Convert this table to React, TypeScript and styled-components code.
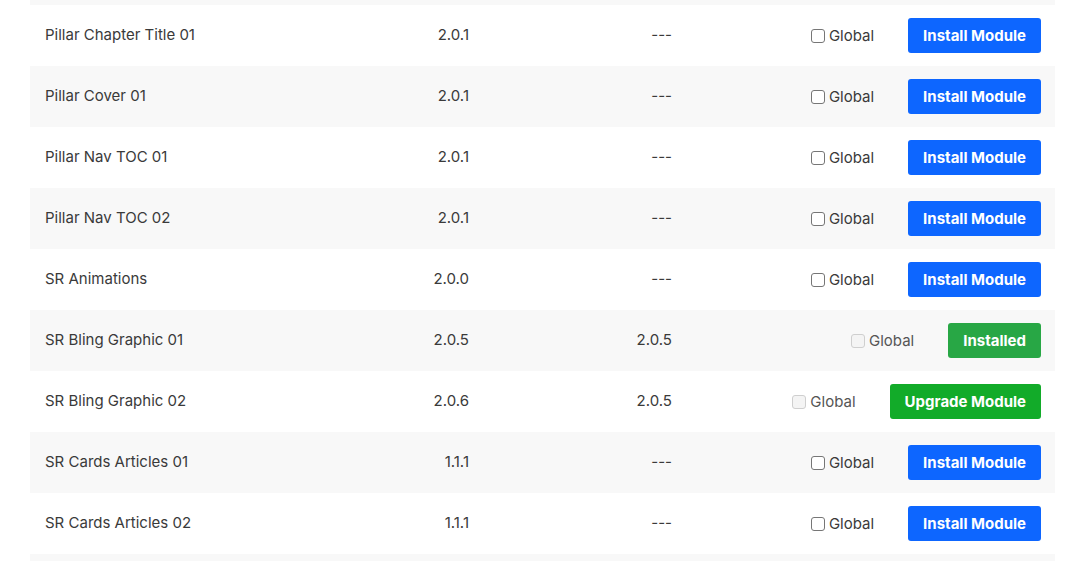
import styled, { createGlobalStyle } from "styled-components";

const GlobalStyle = createGlobalStyle`
  html, body {
    margin: 0;
    padding: 0;
    background: #fff;
    overflow: hidden;
  }
  body {
    font-family: Inter, "Noto Sans", sans-serif;
    color: #3a3a3a;
  }
`;

type ModuleRow = {
  name: string;
  version: string;
  installed?: string;
  status: "install" | "installed" | "upgrade";
};

const modules: ModuleRow[] = [
  { name: "Pillar Chapter Title 01", version: "2.0.1", status: "install" },
  { name: "Pillar Cover 01", version: "2.0.1", status: "install" },
  { name: "Pillar Nav TOC 01", version: "2.0.1", status: "install" },
  { name: "Pillar Nav TOC 02", version: "2.0.1", status: "install" },
  { name: "SR Animations", version: "2.0.0", status: "install" },
  { name: "SR Bling Graphic 01", version: "2.0.5", installed: "2.0.5", status: "installed" },
  { name: "SR Bling Graphic 02", version: "2.0.6", installed: "2.0.5", status: "upgrade" },
  { name: "SR Cards Articles 01", version: "1.1.1", status: "install" },
  { name: "SR Cards Articles 02", version: "1.1.1", status: "install" },
];

const Page = styled.div`
  padding: 0 29px 0 30px;
  height: 561px;
  overflow: hidden;
`;

const Table = styled.div`
  display: flex;
  flex-direction: column;
`;

// edges of the striped rows scrolled out of view
const ScrollCap = styled.div<{ $h: number }>`
  height: ${(p) => p.$h}px;
  flex-shrink: 0;
  background: #f8f8f8;
`;

const Row = styled.div<{ $striped: boolean }>`
  display: grid;
  grid-template-columns: 251px 203px 203px 1fr;
  align-items: center;
  height: 61px;
  flex-shrink: 0;
  background: ${(p) => (p.$striped ? "#f8f8f8" : "#fff")};
  font-size: 15px;
  line-height: 20px;
  color: #3a3a3a;
`;

const Cell = styled.div<{ $align?: "left" | "right" }>`
  padding: 0 15px 1px;
  text-align: ${(p) => p.$align || "left"};
  white-space: nowrap;
`;

const ActionCell = styled.div`
  display: flex;
  align-items: center;
  justify-content: flex-end;
  gap: 34px;
  padding: 0 14px 0 15px;
`;

const CheckLabel = styled.label<{ $disabled?: boolean }>`
  display: flex;
  align-items: center;
  gap: 4px;
  font-size: 15px;
  color: ${(p) => (p.$disabled ? "#555" : "#3a3a3a")};
`;

const Box = styled.span<{ $disabled?: boolean }>`
  width: 14px;
  height: 14px;
  box-sizing: border-box;
  border: 1px solid ${(p) => (p.$disabled ? "#cfcfcf" : "#767676")};
  border-radius: 3px;
  background: ${(p) => (p.$disabled ? "#f4f4f4" : "#fff")};
`;

const Button = styled.button<{ $kind: ModuleRow["status"] }>`
  height: 35px;
  padding: 0 15px;
  border: none;
  border-radius: 3px;
  font-family: Inter, "Noto Sans", sans-serif;
  font-size: 15px;
  font-weight: 700;
  color: #fff;
  cursor: pointer;
  background: ${(p) =>
    p.$kind === "install" ? "#0d66ff" : p.$kind === "installed" ? "#28a745" : "#12ab29"};
`;

const labels = {
  install: "Install Module",
  installed: "Installed",
  upgrade: "Upgrade Module",
};

export default function App() {
  return (
    <>
      <GlobalStyle />
      <Page>
        <Table>
          <ScrollCap $h={5} />
          {modules.map((m, i) => {
            const locked = m.status !== "install";
            return (
              <Row key={m.name} $striped={i % 2 === 1}>
                <Cell>{m.name}</Cell>
                <Cell $align="right">{m.version}</Cell>
                <Cell $align="right">{m.installed || "---"}</Cell>
                <ActionCell>
                  <CheckLabel $disabled={locked}>
                    <Box $disabled={locked} />
                    Global
                  </CheckLabel>
                  <Button $kind={m.status}>{labels[m.status]}</Button>
                </ActionCell>
              </Row>
            );
          })}
          <ScrollCap $h={10} />
        </Table>
      </Page>
    </>
  );
}
